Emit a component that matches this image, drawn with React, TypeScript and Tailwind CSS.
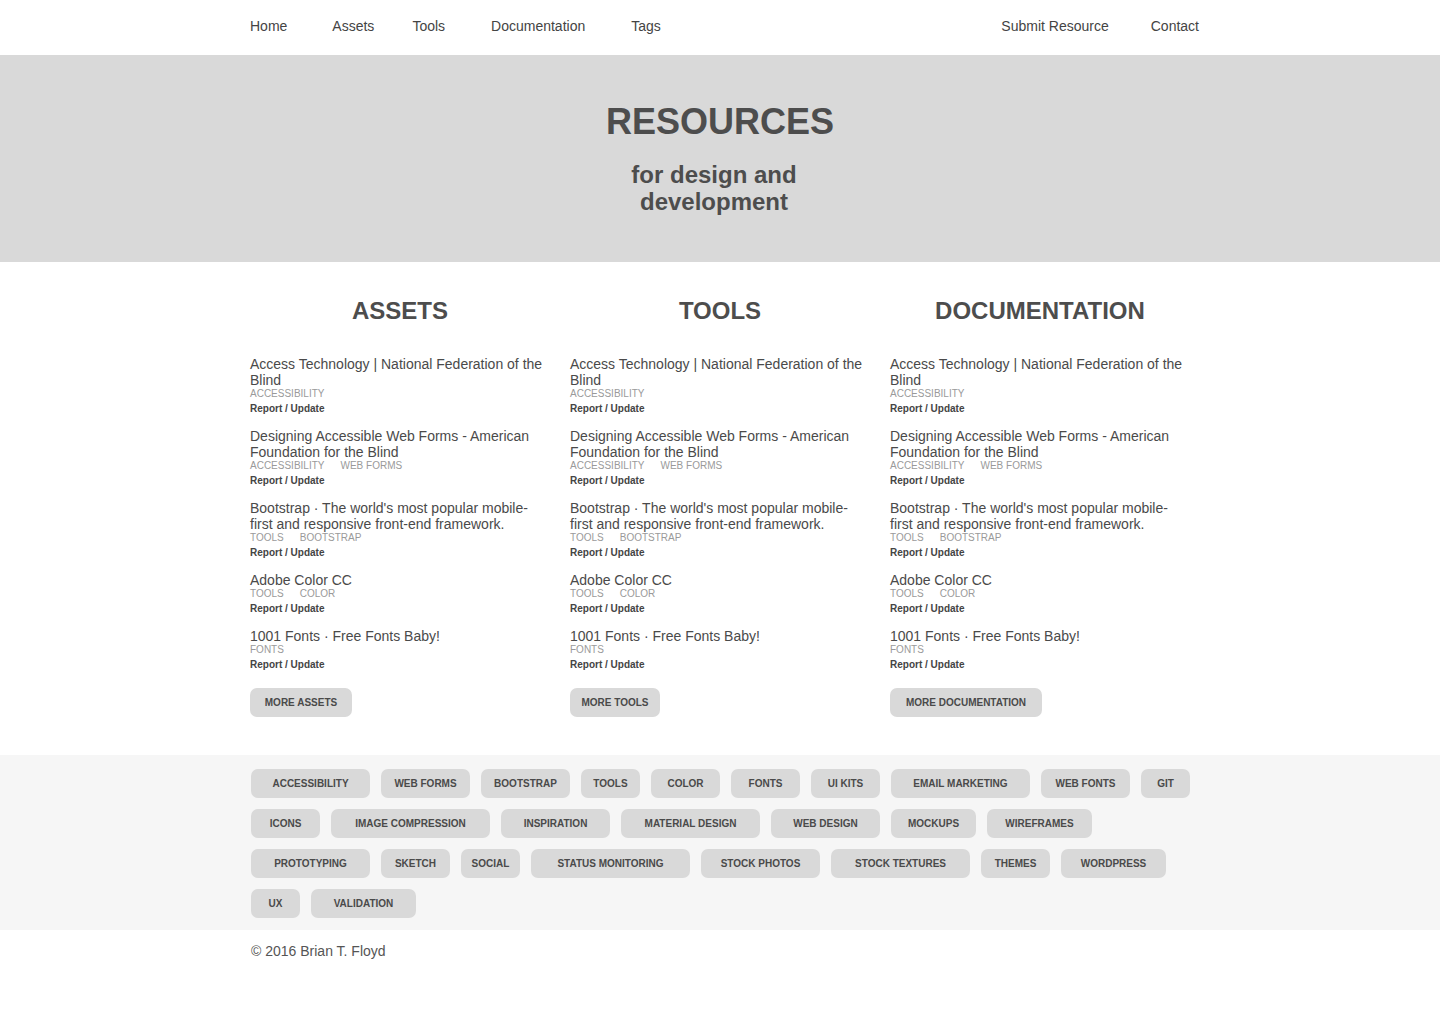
const navLeft = [
  { label: 'Home', ml: '' },
  { label: 'Assets', ml: 'ml-[45px]' },
  { label: 'Tools', ml: 'ml-[38px]' },
  { label: 'Documentation', ml: 'ml-[46px]' },
  { label: 'Tags', ml: 'ml-[46px]' },
]

const items = [
  { title: 'Access Technology | National Federation of the Blind', tags: ['Accessibility'] },
  { title: 'Designing Accessible Web Forms - American Foundation for the Blind', tags: ['Accessibility', 'Web Forms'] },
  { title: "Bootstrap · The world's most popular mobile-first and responsive front-end framework.", tags: ['Tools', 'Bootstrap'] },
  { title: 'Adobe Color CC', tags: ['Tools', 'Color'] },
  { title: '1001 Fonts · Free Fonts Baby!', tags: ['Fonts'] },
]

const columns = [
  { heading: 'ASSETS', more: 'MORE ASSETS', w: 'w-[102px]' },
  { heading: 'TOOLS', more: 'MORE TOOLS', w: 'w-[90px]' },
  { heading: 'DOCUMENTATION', more: 'MORE DOCUMENTATION', w: 'w-[152px]' },
]

// pill widths measured off the reference, one row each
const tagRows: { label: string; w: string }[][] = [
  [
    { label: 'ACCESSIBILITY', w: 'w-[119px]' },
    { label: 'WEB FORMS', w: 'w-[89px]' },
    { label: 'BOOTSTRAP', w: 'w-[89px]' },
    { label: 'TOOLS', w: 'w-[59px]' },
    { label: 'COLOR', w: 'w-[69px]' },
    { label: 'FONTS', w: 'w-[69px]' },
    { label: 'UI KITS', w: 'w-[69px]' },
    { label: 'EMAIL MARKETING', w: 'w-[139px]' },
    { label: 'WEB FONTS', w: 'w-[89px]' },
    { label: 'GIT', w: 'w-[49px]' },
  ],
  [
    { label: 'ICONS', w: 'w-[69px]' },
    { label: 'IMAGE COMPRESSION', w: 'w-[159px]' },
    { label: 'INSPIRATION', w: 'w-[109px]' },
    { label: 'MATERIAL DESIGN', w: 'w-[139px]' },
    { label: 'WEB DESIGN', w: 'w-[109px]' },
    { label: 'MOCKUPS', w: 'w-[85px]' },
    { label: 'WIREFRAMES', w: 'w-[105px]' },
  ],
  [
    { label: 'PROTOTYPING', w: 'w-[119px]' },
    { label: 'SKETCH', w: 'w-[69px]' },
    { label: 'SOCIAL', w: 'w-[59px]' },
    { label: 'STATUS MONITORING', w: 'w-[159px]' },
    { label: 'STOCK PHOTOS', w: 'w-[119px]' },
    { label: 'STOCK TEXTURES', w: 'w-[139px]' },
    { label: 'THEMES', w: 'w-[69px]' },
    { label: 'WORDPRESS', w: 'w-[105px]' },
  ],
  [
    { label: 'UX', w: 'w-[49px]' },
    { label: 'VALIDATION', w: 'w-[105px]' },
  ],
]

function ResourceItem({ title, tags }: { title: string; tags: string[] }) {
  return (
    <div className="mb-[12px]">
      <a href="#" className="block text-[14px] leading-[16px] text-[#4a4a4a]">
        {title}
      </a>
      <div className="flex gap-[16px] text-[10px] leading-[11px] text-[#9a9a9a] uppercase">
        {tags.map((t) => (
          <span key={t}>{t}</span>
        ))}
      </div>
      <a href="#" className="block mt-[3px] text-[10px] leading-[14px] font-bold text-[#444]">
        Report / Update
      </a>
    </div>
  )
}

export default function App() {
  return (
    <div className="min-h-[1024px] bg-white text-[#444] font-['Liberation_Sans',Arial,sans-serif]">
      <nav>
        <div className="w-[940px] mx-auto h-[55px] pb-[3px] flex items-center justify-between text-[14px] leading-[20px] text-[#444]">
          <div className="flex">
            {navLeft.map((n) => (
              <a key={n.label} href="#" className={n.ml}>
                {n.label}
              </a>
            ))}
          </div>
          <div className="flex gap-[42px] -mr-[9px]">
            <a href="#">Submit Resource</a>
            <a href="#">Contact</a>
          </div>
        </div>
      </nav>

      <header className="bg-[#d9d9d9] pt-[47px] pb-[47px] text-center text-[#4d4d4d]">
        <h1 className="text-[36px] leading-[40px] font-bold">RESOURCES</h1>
        <div className="flex justify-center pr-[12px] mt-[19px]">
          <p className="w-[200px] text-[24px] leading-[27px] font-bold">for design and development</p>
        </div>
      </header>

      <main className="w-[940px] mx-auto pt-[35px] pb-[38px] grid grid-cols-3 gap-x-[20px]">
        {columns.map((c) => (
          <section key={c.heading}>
            <h2 className="text-center text-[24px] leading-[28px] font-bold text-[#4d4d4d]">{c.heading}</h2>
            <div className="mt-[31px]">
              {items.map((it) => (
                <ResourceItem key={it.title} title={it.title} tags={it.tags} />
              ))}
            </div>
            <button
              className={`${c.w} mt-[4px] h-[29px] rounded-[7px] bg-[#d9d9d9] text-[10px] font-bold text-[#4a4a4a] text-center`}
            >
              {c.more}
            </button>
          </section>
        ))}
      </main>

      <div className="bg-[#f6f6f6] pt-[14px] pb-[12px]">
        <div className="w-[940px] mx-auto pl-[1px] flex flex-col gap-[11px]">
          {tagRows.map((row, i) => (
            <div key={i} className="flex gap-[11px]">
              {row.map((t) => (
                <a
                  key={t.label}
                  href="#"
                  className={`${t.w} h-[29px] rounded-[7px] bg-[#d9d9d9] flex items-center justify-center text-[10px] font-bold text-[#4a4a4a]`}
                >
                  {t.label}
                </a>
              ))}
            </div>
          ))}
        </div>
      </div>

      <footer className="w-[940px] mx-auto pt-[13px] pl-[1px] text-[14px] leading-[16px] text-[#555]">
        © 2016 Brian T. Floyd
      </footer>
    </div>
  )
}
